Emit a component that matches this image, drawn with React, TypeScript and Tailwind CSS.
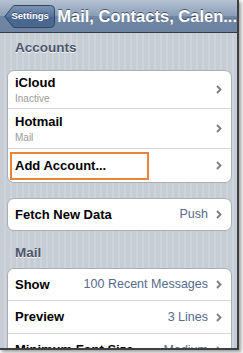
import React from "react";

const font = { fontFamily: '"Liberation Sans", Arial, sans-serif' };

function Chevron() {
  return (
    <svg width="6" height="9" viewBox="0 0 6 9" className="shrink-0">
      <path d="M1 1 L4.5 4.5 L1 8" fill="none" stroke="#7b7f85" strokeWidth="1.9" />
    </svg>
  );
}

function Row({
  title,
  sub,
  value,
  h,
  last,
  highlight,
}: {
  title: string;
  sub?: string;
  value?: string;
  h: string;
  last?: boolean;
  highlight?: boolean;
}) {
  return (
    <div className={`relative flex items-center pl-[7px] pr-[9px] ${h} ${last ? "" : "border-b border-[#d6d8db]"}`}>
      <div className="flex flex-col flex-1 min-w-0">
        <span className="text-[13px] font-bold text-black leading-[16px] whitespace-nowrap">{title}</span>
        {sub && <span className="text-[10px] text-[#9a9a9a] leading-[13px] mt-[1px]">{sub}</span>}
      </div>
      {value && <span className="text-[12.5px] text-[#556a8c] mr-[8px] whitespace-nowrap">{value}</span>}
      <Chevron />
      {highlight && (
        <div className="absolute left-[2px] top-[3px] w-[139px] h-[28px] border-2 border-[#e9853a]" />
      )}
    </div>
  );
}

export default function App() {
  return (
    <div className="w-[243px] h-[353px] bg-[#f4f4f4] relative overflow-hidden" style={font}>
      <div className="w-[239px] h-[350px] border-r-2 border-b-2 border-[#3d3f42] shadow-[2px_2px_3px_rgba(0,0,0,0.35)] overflow-hidden bg-[repeating-linear-gradient(90deg,#c6cdd5_0px,#c6cdd5_4px,#ced4db_4px,#ced4db_6px)]">
        {/* Nav bar */}
        <div className="h-[33px] flex items-center border-b border-[#2f3a4a] bg-[linear-gradient(#b5c2d3,#8a9db7_50%,#7086a4_51%,#6c83a1)]">
          <div className="relative ml-[4px] w-[51px] h-[23px] flex items-center justify-center">
            <svg width="51" height="23" viewBox="0 0 51 23" className="absolute inset-0">
              <defs>
                <linearGradient id="bb" x1="0" y1="0" x2="0" y2="1">
                  <stop offset="0" stopColor="#7d95b6" />
                  <stop offset="0.5" stopColor="#56739c" />
                  <stop offset="0.51" stopColor="#48668f" />
                  <stop offset="1" stopColor="#4a6891" />
                </linearGradient>
              </defs>
              <path
                d="M0.8 11.5 L9 1.2 Q9.6 0.5 10.6 0.5 L46.5 0.5 Q50.5 0.5 50.5 4.5 L50.5 18.5 Q50.5 22.5 46.5 22.5 L10.6 22.5 Q9.6 22.5 9 21.8 Z"
                fill="url(#bb)"
                stroke="#33475f"
                strokeWidth="1"
              />
            </svg>
            <span className="relative ml-[6px] text-[9.5px] font-bold text-white [text-shadow:0_-1px_0_rgba(0,0,0,0.45)]">
              Settings
            </span>
          </div>
          <span className="ml-[7px] text-[16.5px] font-bold text-white whitespace-nowrap [text-shadow:0_-1px_0_rgba(0,0,0,0.5)]">
            Mail, Contacts, Calen...
          </span>
        </div>

        <div className="pl-[7px] pr-[5px]">
          {/* Accounts */}
          <div className="h-[37px] pt-[7px] pl-[8px]">
            <span className="block text-[13.5px] font-bold text-[#4c566a] leading-[15px] [text-shadow:0_1px_0_rgba(255,255,255,0.8)]">
              Accounts
            </span>
          </div>
          <div className="bg-white border border-[#a9aeb4] rounded-[7px]">
            <Row title="iCloud" sub="Inactive" h="h-[38px]" />
            <Row title="Hotmail" sub="Mail" h="h-[40px]" />
            <Row title="Add Account..." h="h-[33px]" last highlight />
          </div>

          <div className="h-[15px]" />
          <div className="bg-white border border-[#a9aeb4] rounded-[7px]">
            <Row title="Fetch New Data" value="Push" h="h-[31px]" last />
          </div>

          {/* Mail */}
          <div className="h-[37px] pt-[14px] pl-[8px]">
            <span className="block text-[13.5px] font-bold text-[#4c566a] leading-[15px] [text-shadow:0_1px_0_rgba(255,255,255,0.8)]">
              Mail
            </span>
          </div>
          <div className="bg-white border border-[#a9aeb4] rounded-[7px]">
            <Row title="Show" value="100 Recent Messages" h="h-[32px]" />
            <Row title="Preview" value="3 Lines" h="h-[33px]" />
            <Row title="Minimum Font Size" value="Medium" h="h-[33px]" />
          </div>
        </div>
      </div>
    </div>
  );
}
